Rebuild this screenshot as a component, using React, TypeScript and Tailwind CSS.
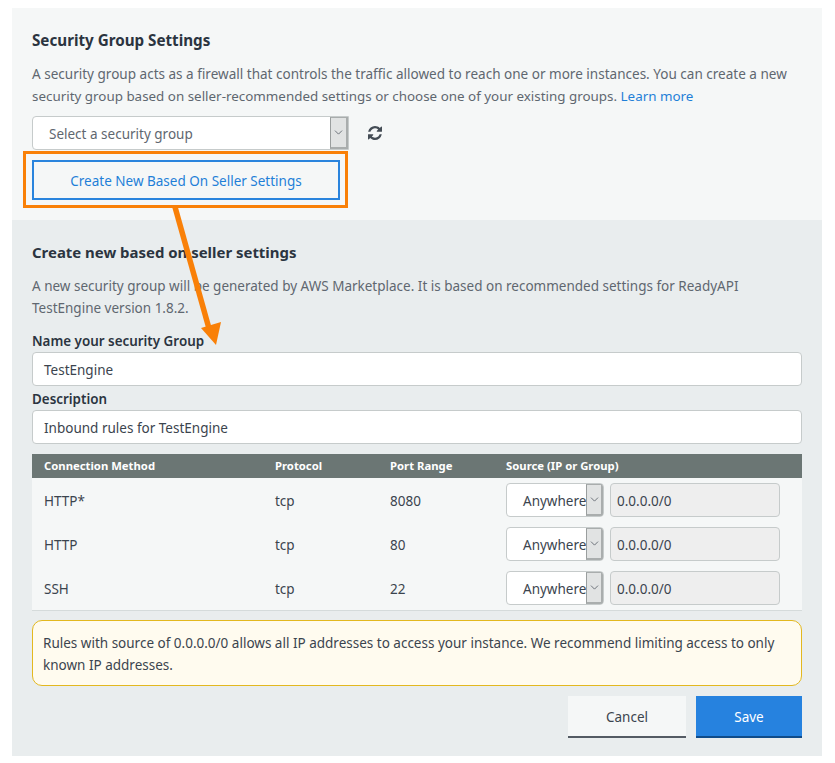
import { ChevronDown } from "lucide-react";

const FONT = "font-['Noto_Sans','Open_Sans',sans-serif]";

const rules = [
  { method: "HTTP*", port: "8080" },
  { method: "HTTP", port: "80" },
  { method: "SSH", port: "22" },
];

function SelectArrow({ w }: { w: string }) {
  return (
    <span className={`${w} self-stretch flex items-center justify-center bg-[#e1e3e3] border-l border-[#9a9e9e] border-r-2 border-b-2 border-r-[#a9adad] border-b-[#a9adad] border-t border-t-[#a9adad]`}>
      <ChevronDown size={13} strokeWidth={1.5} className="text-[#545b64]" />
    </span>
  );
}

export default function App() {
  return (
    <div className={`${FONT} relative w-[835px] h-[763px] bg-white pt-2 pl-3 text-[13.5px] text-[#5f6770]`}>
      <div className="w-[810px] h-[748px] flex flex-col">
        {/* Top section */}
        <div className="h-[212px] bg-[#f5f7f7] px-5 pt-[21px]">
          <h2 className="text-[15.2px] leading-[22px] font-bold text-[#2b3440]">Security Group Settings</h2>
          <p className="mt-[12px] leading-[22px]">
            <span className="block text-[13.54px] whitespace-nowrap">A security group acts as a firewall that controls the traffic allowed to reach one or more instances. You can create a new</span>
            <span className="block text-[13.4px] whitespace-nowrap">security group based on seller-recommended settings or choose one of your existing groups. <span className="text-[#1f7fd8]">Learn more</span></span>
          </p>
          <div className="mt-[9px] flex items-center">
            <div className="w-[317px] h-[34px] flex items-center bg-white border border-[#c6cbcb] rounded-l overflow-hidden">
              <span className="flex-1 pl-4 pt-[3px]">Select a security group</span>
              <SelectArrow w="w-[18px]" />
            </div>
            <svg className="ml-[19px] text-[#444c55]" width="14" height="14" viewBox="0 0 1536 1536" fill="currentColor">
              <path d="M1511 928q0 5-1 7-64 268-268 434.5T764 1536q-146 0-282.500-55T238 1324l-129 129q-19 19-45 19t-45-19-19-45V960q0-26 19-45t45-19h448q26 0 45 19t19 45-19 45L420 1142q71 66 161 102t187 36q134 0 250-65t186-179q11-17 53-117 8-23 30-23h192q13 0 22.500 9.500t9.500 22.500zm25-800v448q0 26-19 45t-45 19h-448q-26 0-45-19t-19-45 19-45l138-138Q969 256 768 256q-134 0-250 65T332 500q-11 17-53 117-8 23-30 23H50q-13 0-22.500-9.500T18 608v-7q65-268 270-434.500T768 0q146 0 284 55.500T1297 212l130-129q19-19 45-19t45 19 19 45z" />
            </svg>
          </div>
          <button className="mt-[10px] w-[308px] h-[40px] border-2 border-[#2a84dd] text-[#1f7fd8] text-center pt-[2px]">
            Create New Based On Seller Settings
          </button>
        </div>

        {/* Bottom section */}
        <div className="flex-1 bg-[#e9edee] px-5 pt-[21px]">
          <h2 className="text-[14.95px] leading-[22px] font-bold text-[#2b3440]">Create new based on seller settings</h2>
          <p className="mt-[12px] leading-[22px] w-[760px]">
            A new security group will be generated by AWS Marketplace. It is based on recommended settings for ReadyAPI TestEngine version 1.8.2.
          </p>
          <label className="block mt-[12px] leading-[20px] text-[13.4px] font-semibold text-[#2b3440]">Name your security Group</label>
          <div className="mt-[1px] h-[34px] flex items-center bg-white border border-[#c6cbcb] rounded pl-[11px] pt-[3px] text-[#3b444e]">TestEngine</div>
          <label className="block mt-[3px] leading-[21px] text-[13.4px] font-semibold text-[#2b3440]">Description</label>
          <div className="h-[34px] flex items-center bg-white border border-[#c6cbcb] rounded pl-[11px] pt-[2px] text-[#3b444e]">Inbound rules for TestEngine</div>

          {/* Rules table */}
          <div className="mt-[10px]">
            <div className="h-[24px] bg-[#6b7674] grid grid-cols-[231px_115px_116px_1fr] pl-3 items-center text-[11.3px] font-bold text-white">
              <span>Connection Method</span>
              <span>Protocol</span>
              <span>Port Range</span>
              <span>Source (IP or Group)</span>
            </div>
            <div className="bg-[#f5f7f7] border-b border-[#d5dbdb]">
              {rules.map((r) => (
                <div key={r.method} className="h-[44px] grid grid-cols-[231px_115px_116px_1fr] pl-3 items-center text-[#3b444e]">
                  <span className="pt-[3px]">{r.method}</span>
                  <span className="pt-[3px]">tcp</span>
                  <span className="pt-[3px]">{r.port}</span>
                  <div className="flex items-center gap-[6px]">
                    <div className="w-[98px] h-[34px] flex items-center bg-white border border-[#c6cbcb] rounded overflow-hidden">
                      <span className="flex-1 pl-4 pt-[2px]">Anywhere</span>
                      <SelectArrow w="w-[17px]" />
                    </div>
                    <div className="w-[170px] h-[34px] flex items-center bg-[#eeeeee] border border-[#c6cbcb] rounded pl-[6px] pt-[2px]">0.0.0.0/0</div>
                  </div>
                </div>
              ))}
            </div>
          </div>

          {/* Warning */}
          <div className="mt-[9px] h-[66px] bg-[#fffbef] border border-[#e3b81f] rounded-[10px] px-[10px] pt-[11px] leading-[22px] text-[#3b444e]">
            Rules with source of 0.0.0.0/0 allows all IP addresses to access your instance. We recommend limiting access to only known IP addresses.
          </div>

          <div className="mt-[10px] flex justify-end gap-[10px]">
            <button className="w-[118px] h-[42px] bg-[#f5f7f7] border-b-2 border-[#545b64] text-[#3b444e] pt-[2px]">Cancel</button>
            <button className="w-[106px] h-[42px] bg-[#2682df] border-b-2 border-[#0f4c8a] text-white pt-[2px]">Save</button>
          </div>
        </div>
      </div>

      {/* Annotation overlay */}
      <div className="absolute left-[23px] top-[151px] w-[325px] h-[57px] border-[3px] border-[#f98008]" />
      <svg className="absolute left-0 top-0 pointer-events-none" width="835" height="763">
        <line x1="175" y1="207" x2="210" y2="332" stroke="#f98008" strokeWidth="5.5" />
        <polygon points="216,345 201,328 221,322" fill="#f98008" />
      </svg>
    </div>
  );
}
